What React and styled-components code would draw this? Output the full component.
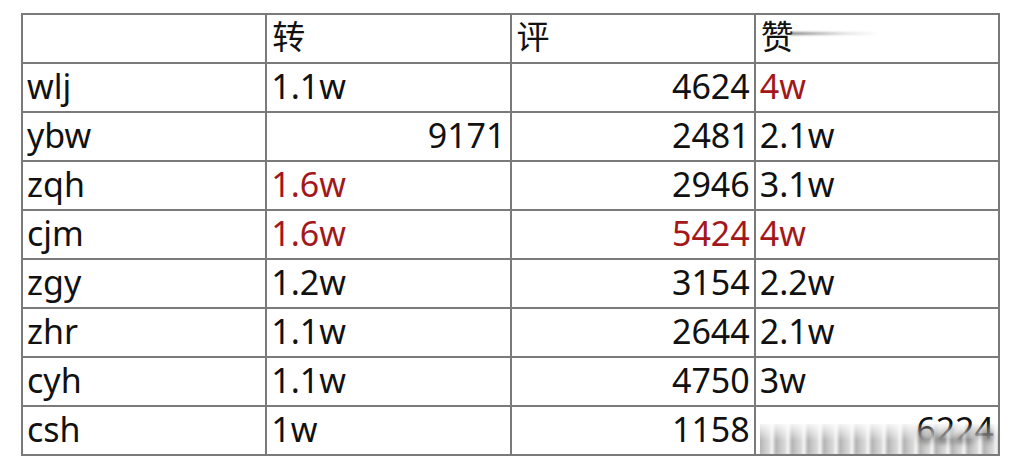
import styled, { createGlobalStyle } from 'styled-components';

const Global = createGlobalStyle`
  html, body {
    margin: 0;
    padding: 0;
    background: #ffffff;
  }
  body {
    width: 1020px;
    height: 465px;
    overflow: hidden;
    font-family: 'Noto Sans', 'Noto Sans CJK SC', sans-serif;
  }
`;

const Page = styled.div`
  padding: 13px 0 0 21px;
`;

const Sheet = styled.table`
  width: 979px;
  border-collapse: collapse;
  table-layout: fixed;
  border: 2px solid #7a7a7a;
`;

const Cell = styled.td`
  position: relative;
  height: 44px;
  padding: 0 4px 3px 4px;
  border: 2px solid #7a7a7a;
  font-size: 34px;
  line-height: 40px;
  color: ${(p) => (p.$hot ? '#a3171b' : '#111111')};
  text-align: ${(p) => (p.$num ? 'right' : 'left')};
  white-space: nowrap;
  overflow: hidden;
  vertical-align: middle;
`;

const HeadCell = styled(Cell)`
  padding-left: 5px;
  font-size: 33px;
`;

const Smudge = styled.span`
  position: absolute;
  left: 34px;
  top: 17px;
  width: 90px;
  height: 3px;
  background: linear-gradient(90deg, rgba(80, 80, 80, 0.7), rgba(160, 160, 160, 0.3) 60%, rgba(255, 255, 255, 0));
  filter: blur(1px);
`;

const Blur = styled.span`
  position: absolute;
  left: 4px;
  right: 0;
  bottom: 0;
  height: 30px;
  background: repeating-linear-gradient(
    90deg,
    rgba(120, 120, 120, 0.55) 0px,
    rgba(150, 150, 150, 0.35) 9px,
    rgba(235, 235, 235, 0.6) 12px,
    rgba(110, 110, 110, 0.5) 16px
  );
  -webkit-mask-image: linear-gradient(180deg, rgba(0, 0, 0, 0.15), #000 55%);
  mask-image: linear-gradient(180deg, rgba(0, 0, 0, 0.15), #000 55%);
  backdrop-filter: blur(3px);
`;

const rows = [
  ['wlj', ['1.1w'], ['4624', 0, 1], ['4w', 1]],
  ['ybw', ['9171', 0, 1], ['2481', 0, 1], ['2.1w']],
  ['zqh', ['1.6w', 1], ['2946', 0, 1], ['3.1w']],
  ['cjm', ['1.6w', 1], ['5424', 1, 1], ['4w', 1]],
  ['zgy', ['1.2w'], ['3154', 0, 1], ['2.2w']],
  ['zhr', ['1.1w'], ['2644', 0, 1], ['2.1w']],
  ['cyh', ['1.1w'], ['4750', 0, 1], ['3w']],
  ['csh', ['1w'], ['1158', 0, 1], ['6224', 0, 1]],
];

export default function App() {
  return (
    <Page>
      <Global />
      <Sheet>
        <tbody>
          <tr>
            <HeadCell></HeadCell>
            <HeadCell>转</HeadCell>
            <HeadCell>评</HeadCell>
            <HeadCell>
              赞<Smudge />
            </HeadCell>
          </tr>
          {rows.map(([name, ...vals], i) => (
            <tr key={name}>
              <Cell>{name}</Cell>
              {vals.map(([v, hot, num], j) => (
                <Cell key={j} $hot={!!hot} $num={!!num}>
                  {v}
                  {i === rows.length - 1 && j === 2 && <Blur />}
                </Cell>
              ))}
            </tr>
          ))}
        </tbody>
      </Sheet>
    </Page>
  );
}
